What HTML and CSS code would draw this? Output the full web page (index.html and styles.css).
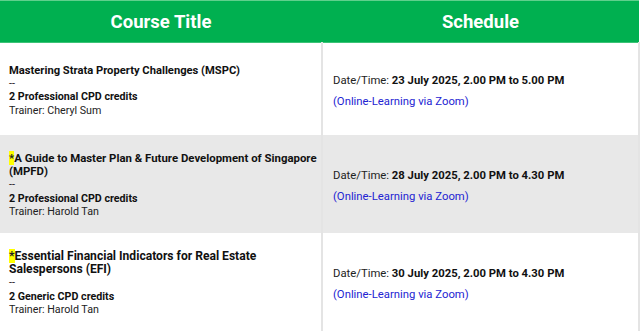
FILE: index.html
```html
<!DOCTYPE html>
<html>
<head>
<meta charset="utf-8">
<link rel="stylesheet" href="styles.css">
</head>
<body>
<table class="courses">
  <thead>
    <tr>
      <th class="col-title">Course Title</th>
      <th class="col-sched">Schedule</th>
    </tr>
  </thead>
  <tbody>
    <tr class="row r1">
      <td class="title-cell">
        <strong class="ttl t1">Mastering Strata Property Challenges (MSPC)</strong><br>
        --<br>
        <strong>2 Professional CPD credits</strong><br>
        Trainer: Cheryl Sum
      </td>
      <td class="sched-cell">
        <p class="dt">Date/Time: <strong>23 July 2025, 2.00 PM to 5.00 PM</strong></p>
        <p class="loc">(Online-Learning via Zoom)</p>
      </td>
    </tr>
    <tr class="row r2 alt">
      <td class="title-cell">
        <strong class="ttl t2"><span class="star">*</span>A Guide to Master Plan &amp; Future Development of Singapore (MPFD)</strong><br>
        --<br>
        <strong>2 Professional CPD credits</strong><br>
        Trainer: Harold Tan
      </td>
      <td class="sched-cell">
        <p class="dt">Date/Time: <strong>28 July 2025, 2.00 PM to 4.30 PM</strong></p>
        <p class="loc">(Online-Learning via Zoom)</p>
      </td>
    </tr>
    <tr class="row r3">
      <td class="title-cell">
        <strong class="ttl t3"><span class="star">*</span>Essential Financial Indicators for Real Estate Salespersons (EFI)</strong><br>
        --<br>
        <strong>2 Generic CPD credits</strong><br>
        Trainer: Harold Tan
      </td>
      <td class="sched-cell">
        <p class="dt">Date/Time: <strong>30 July 2025, 2.00 PM to 4.30 PM</strong></p>
        <p class="loc">(Online-Learning via Zoom)</p>
      </td>
    </tr>
  </tbody>
</table>
</body>
</html>
```

FILE: styles.css
```css
html, body {
  margin: 0;
  padding: 0;
  background: #fff;
}
body {
  font-family: Roboto, "Liberation Sans", Arial, sans-serif;
  color: #222;
}
.courses {
  width: 640px;
  border-collapse: collapse;
  table-layout: fixed;
}
.courses th {
  background: #00b050;
  color: #fff;
  font-size: 18.5px;
  font-weight: 700;
  height: 41px;
  padding: 0;
  text-align: center;
  vertical-align: middle;
  border-top: 1px solid #5fd08c;
  border-bottom: 1px solid #3cc377;
}
.col-title {
  width: 322px;
}
.courses td {
  font-size: 10.7px;
  line-height: 13.3px;
  vertical-align: middle;
  padding: 3px 0 0 9px;
}
.ttl { display: inline; }
.t1 { font-size: 11.2px; }
.t2 { font-size: 11.4px; }
.t3 { font-size: 12.1px; }
.courses td.sched-cell {
  border-left: 2px solid #e4e4e4;
  border-right: 2px solid #e4e4e4;
  padding: 6px 0 0 10px;
}
.r1 { height: 92px; }
.r2 { height: 98px; }
.r3 { height: 98px; }
.alt td {
  background: #e8e8e8;
}
.star {
  background: #ffff00;
  color: #222;
}
.dt {
  margin: 0;
  font-size: 11.3px;
  line-height: 14px;
}
.loc {
  margin: 7px 0 0;
  font-size: 11.3px;
  line-height: 14px;
  color: #2323d2;
}
strong {
  font-weight: 700;
  color: #111;
}
```
